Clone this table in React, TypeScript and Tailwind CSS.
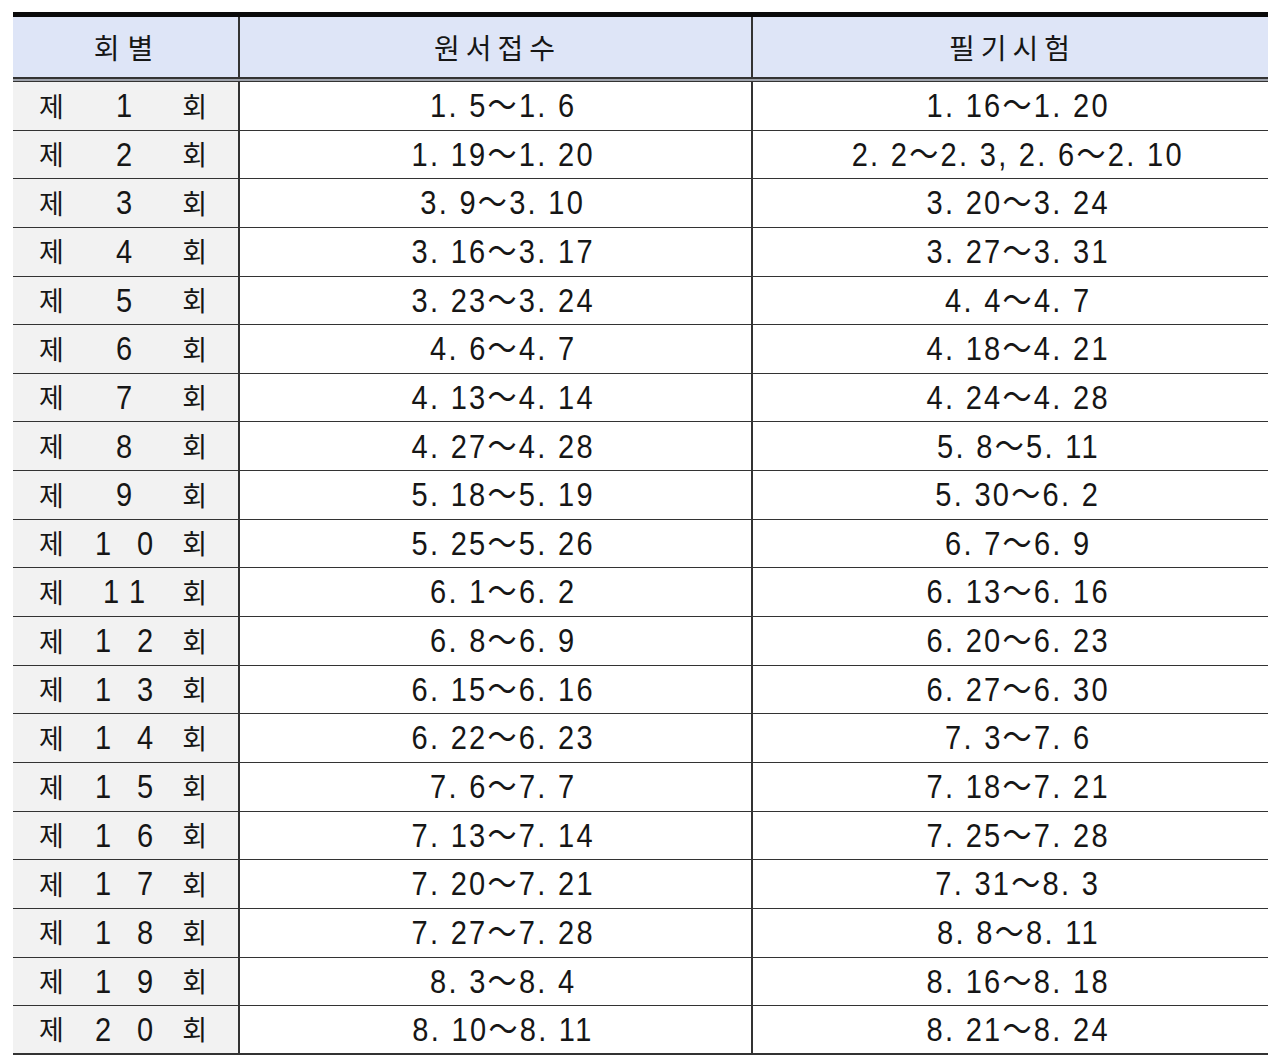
import React from 'react';

// 회차별 원서접수 / 필기시험 일정표
const rows: { n: string[]; gap: string; apply: string; exam: string }[] = [
  { n: ['1'], gap: 'w-[42px]', apply: '1. 5～1. 6', exam: '1. 16～1. 20' },
  { n: ['2'], gap: 'w-[42px]', apply: '1. 19～1. 20', exam: '2. 2～2. 3, 2. 6～2. 10' },
  { n: ['3'], gap: 'w-[42px]', apply: '3. 9～3. 10', exam: '3. 20～3. 24' },
  { n: ['4'], gap: 'w-[42px]', apply: '3. 16～3. 17', exam: '3. 27～3. 31' },
  { n: ['5'], gap: 'w-[42px]', apply: '3. 23～3. 24', exam: '4. 4～4. 7' },
  { n: ['6'], gap: 'w-[42px]', apply: '4. 6～4. 7', exam: '4. 18～4. 21' },
  { n: ['7'], gap: 'w-[42px]', apply: '4. 13～4. 14', exam: '4. 24～4. 28' },
  { n: ['8'], gap: 'w-[42px]', apply: '4. 27～4. 28', exam: '5. 8～5. 11' },
  { n: ['9'], gap: 'w-[42px]', apply: '5. 18～5. 19', exam: '5. 30～6. 2' },
  { n: ['1', '0'], gap: 'w-[42px]', apply: '5. 25～5. 26', exam: '6. 7～6. 9' },
  { n: ['1', '1'], gap: 'w-[26px]', apply: '6. 1～6. 2', exam: '6. 13～6. 16' },
  { n: ['1', '2'], gap: 'w-[42px]', apply: '6. 8～6. 9', exam: '6. 20～6. 23' },
  { n: ['1', '3'], gap: 'w-[42px]', apply: '6. 15～6. 16', exam: '6. 27～6. 30' },
  { n: ['1', '4'], gap: 'w-[42px]', apply: '6. 22～6. 23', exam: '7. 3～7. 6' },
  { n: ['1', '5'], gap: 'w-[42px]', apply: '7. 6～7. 7', exam: '7. 18～7. 21' },
  { n: ['1', '6'], gap: 'w-[42px]', apply: '7. 13～7. 14', exam: '7. 25～7. 28' },
  { n: ['1', '7'], gap: 'w-[42px]', apply: '7. 20～7. 21', exam: '7. 31～8. 3' },
  { n: ['1', '8'], gap: 'w-[42px]', apply: '7. 27～7. 28', exam: '8. 8～8. 11' },
  { n: ['1', '9'], gap: 'w-[42px]', apply: '8. 3～8. 4', exam: '8. 16～8. 18' },
  { n: ['2', '0'], gap: 'w-[42px]', apply: '8. 10～8. 11', exam: '8. 21～8. 24' },
];

const ko = "font-['Noto_Sans_CJK_KR',sans-serif]";
const digits = "font-['Liberation_Sans','Noto_Sans_CJK_KR',sans-serif] text-[33px]";

function Dates({ text }: { text: string }) {
  // 원본의 가늘고 긴 숫자꼴에 맞추어 가로로 좁힘
  return (
    <span className={`inline-block scale-x-[0.88] whitespace-nowrap tracking-[2.6px] ${digits}`}>{text}</span>
  );
}

export default function App() {
  return (
    <div className="min-h-[1056px] bg-white pt-[12px] pl-[13px] text-[#161616]">
      <div className="w-[1255px]">
        {/* 머리글 */}
        <div className="h-[5px] bg-[#0a0a0a]" />
        <div className={`flex h-[60px] bg-[#dee5f7] text-[28px] ${ko}`}>
          <div className="flex w-[227px] items-center justify-center border-r-2 border-[#333] pl-[4px] tracking-[8px]">회별</div>
          <div className="flex w-[513px] items-center justify-center border-r-2 border-[#333] pl-[4px] tracking-[6px]">원서접수</div>
          <div className="flex flex-1 items-center justify-center pl-[4px] tracking-[6px]">필기시험</div>
        </div>
        <div className="h-[1.5px] bg-[#333]" />
        <div className="h-[2px] bg-[#9ea2ab]" />
        <div className="h-[1.5px] bg-[#333]" />

        {rows.map((r, i) => (
          <div
            key={i}
            className={`flex h-[48.65px] ${i === rows.length - 1 ? 'border-b-2' : 'border-b-[1.5px]'} border-[#333]`}
          >
            <div className="flex w-[227px] items-center justify-between border-r-2 border-[#333] bg-[#f2f2f2] pl-[26px] pr-[31px]">
              <span className={`text-[27px] ${ko}`}>제</span>
              <span className="flex pl-[3px]">
                {r.n.map((d, j) => (
                  <span key={j} className={`${r.gap} text-center`}>
                    <span className={`inline-block scale-x-[0.88] ${digits}`}>{d}</span>
                  </span>
                ))}
              </span>
              <span className={`text-[27px] ${ko}`}>회</span>
            </div>
            <div className="flex w-[513px] items-center justify-center border-r-2 border-[#333] pl-[15px]">
              <Dates text={r.apply} />
            </div>
            <div className="flex flex-1 items-center justify-center pl-[15px]">
              <Dates text={r.exam} />
            </div>
          </div>
        ))}
      </div>
    </div>
  );
}
